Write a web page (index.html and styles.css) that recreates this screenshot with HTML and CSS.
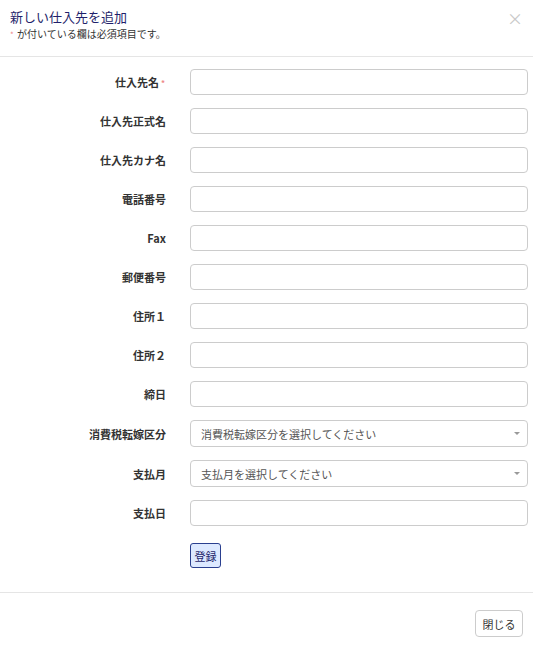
FILE: index.html
```html
<!DOCTYPE html>
<html lang="ja">
<head>
<meta charset="utf-8">
<link rel="stylesheet" href="styles.css">
</head>
<body>
<div class="modal">
  <div class="header">
    <div class="titles">
      <div class="title">新しい仕入先を追加</div>
      <div class="sub"><span class="req">*</span> が付いている欄は必須項目です。</div>
    </div>
    <div class="close">×</div>
  </div>
  <div class="body">
    <div class="row"><label class="lbl">仕入先名<span class="req">*</span></label><div class="input"></div></div>
    <div class="row"><label class="lbl">仕入先正式名</label><div class="input"></div></div>
    <div class="row"><label class="lbl">仕入先カナ名</label><div class="input"></div></div>
    <div class="row"><label class="lbl">電話番号</label><div class="input"></div></div>
    <div class="row"><label class="lbl">Fax</label><div class="input"></div></div>
    <div class="row"><label class="lbl">郵便番号</label><div class="input"></div></div>
    <div class="row"><label class="lbl">住所１</label><div class="input"></div></div>
    <div class="row"><label class="lbl">住所２</label><div class="input"></div></div>
    <div class="row"><label class="lbl">締日</label><div class="input"></div></div>
    <div class="row"><label class="lbl">消費税転嫁区分</label><div class="input select"><span>消費税転嫁区分を選択してください</span><i class="caret"></i></div></div>
    <div class="row"><label class="lbl">支払月</label><div class="input select"><span>支払月を選択してください</span><i class="caret"></i></div></div>
    <div class="row"><label class="lbl">支払日</label><div class="input"></div></div>
    <div class="row actions"><div class="lbl"></div><div><button class="btn-submit">登録</button></div></div>
  </div>
  <div class="footer">
    <button class="btn-close">閉じる</button>
  </div>
</div>
</body>
</html>
```
FILE: styles.css
```css
html, body {
  margin: 0;
  padding: 0;
  background: #fff;
}
body {
  font-family: "Noto Sans CJK JP", "Noto Sans", "DejaVu Sans", sans-serif;
  color: #333;
}
.modal {
  width: 533px;
}
.header {
  display: flex;
  justify-content: space-between;
  align-items: flex-start;
  padding: 8px 10px 0 10px;
  height: 48px;
  border-bottom: 1px solid #e5e5e5;
}
.title {
  font-size: 13px;
  line-height: 18px;
  color: #1f1f6b;
}
.sub {
  font-size: 10px;
  line-height: 14px;
  color: #333;
  margin-top: 1px;
}
.req {
  color: #e88;
  font-size: 8px;
  margin-right: 1px;
}
.lbl .req {
  margin-left: 2px;
  vertical-align: 1px;
}
.close {
  font-size: 16px;
  line-height: 16px;
  color: #c8c8c8;
  margin-top: 2px;
  margin-right: 0;
}
.body {
  padding: 12px 5px 0 0;
  display: flex;
  flex-direction: column;
  gap: 13px;
}
.row {
  display: flex;
  align-items: center;
  gap: 24px;
}
.lbl {
  width: 166px;
  text-align: right;
  font-size: 11px;
  font-weight: bold;
  color: #333;
  flex: none;
}
.input {
  width: 336px;
  height: 24px;
  border: 1px solid #ccc;
  border-radius: 4px;
  box-sizing: content-box;
}
.select {
  display: flex;
  align-items: center;
  justify-content: space-between;
  height: 25px;
  font-size: 11px;
  color: #555;
}
.select span {
  padding-left: 10px;
}
.caret {
  width: 0;
  height: 0;
  border-left: 3px solid transparent;
  border-right: 3px solid transparent;
  border-top: 3px solid #999;
  margin-right: 7px;
}
.actions {
  margin-top: 4px;
}
.btn-submit {
  font-family: inherit;
  font-size: 11px;
  color: #1f1f6b;
  background: #dde9ff;
  border: 1px solid #2a3f8f;
  border-radius: 3px;
  width: 31px;
  height: 25px;
  padding: 0;
  display: block;
}
.footer {
  margin-top: 24px;
  border-top: 1px solid #e5e5e5;
  padding: 17px 10px 0 0;
  display: flex;
  justify-content: flex-end;
}
.btn-close {
  font-family: inherit;
  font-size: 11px;
  color: #333;
  background: #fff;
  border: 1px solid #ccc;
  border-radius: 4px;
  width: 48px;
  height: 27px;
  padding: 0;
}
```
